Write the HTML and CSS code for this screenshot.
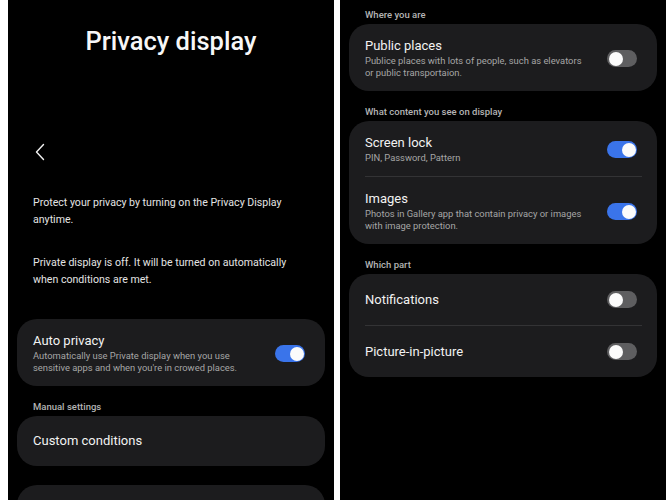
FILE: index.html
```html
<!DOCTYPE html>
<html>
<head>
<meta charset="utf-8">
<link rel="stylesheet" href="styles.css">
</head>
<body>
<main class="screens">
  <section class="panel">
    <h1 class="title">Privacy display</h1>
    <button class="back" aria-label="Back">
      <svg width="10" height="18" viewBox="0 0 10 18"><path d="M8.5 1.5 L1.5 9 L8.5 16.5" fill="none" stroke="#f2f2f2" stroke-width="1.4" stroke-linecap="round" stroke-linejoin="round"/></svg>
    </button>
    <p class="intro">Protect your privacy by turning on the Privacy Display anytime.</p>
    <p class="intro second">Private display is off. It will be turned on automatically when conditions are met.</p>
    <div class="card first-card">
      <div class="row">
        <div class="text">
          <div class="label">Auto privacy</div>
          <div class="sub">Automatically use Private display when you use sensitive apps and when you're in crowed places.</div>
        </div>
        <span class="toggle on"><span class="knob"></span></span>
      </div>
    </div>
    <div class="section">Manual settings</div>
    <div class="card">
      <div class="row single">
        <div class="label">Custom conditions</div>
      </div>
    </div>
    <div class="card spaced">
      <div class="row single">
        <div class="label">&nbsp;</div>
      </div>
    </div>
  </section>

  <section class="panel">
    <div class="section top">Where you are</div>
    <div class="card">
      <div class="row">
        <div class="text">
          <div class="label">Public places</div>
          <div class="sub">Publice places with lots of people, such as elevators or public transportaion.</div>
        </div>
        <span class="toggle off"><span class="knob"></span></span>
      </div>
    </div>
    <div class="section">What content you see on display</div>
    <div class="card">
      <div class="row">
        <div class="text">
          <div class="label">Screen lock</div>
          <div class="sub">PIN, Password, Pattern</div>
        </div>
        <span class="toggle on"><span class="knob"></span></span>
      </div>
      <div class="divider"></div>
      <div class="row">
        <div class="text">
          <div class="label">Images</div>
          <div class="sub">Photos in Gallery app that contain privacy or images with image protection.</div>
        </div>
        <span class="toggle on"><span class="knob"></span></span>
      </div>
    </div>
    <div class="section">Which part</div>
    <div class="card">
      <div class="row single">
        <div class="label">Notifications</div>
        <span class="toggle off"><span class="knob"></span></span>
      </div>
      <div class="divider"></div>
      <div class="row single">
        <div class="label">Picture-in-picture</div>
        <span class="toggle off"><span class="knob"></span></span>
      </div>
    </div>
  </section>
</main>
</body>
</html>
```

FILE: styles.css
```css
* { box-sizing: border-box; }

html, body {
  margin: 0;
  padding: 0;
  background: #ffffff;
}

body {
  font-family: Roboto, "Noto Sans", sans-serif;
  color: #f2f2f2;
}

.screens {
  display: flex;
  gap: 6px;
  padding-left: 8px;
  height: 500px;
}

.panel {
  width: 326px;
  height: 500px;
  background: #000000;
  overflow: hidden;
  padding: 0 9px;
  display: flex;
  flex-direction: column;
}

.title {
  margin: 26px 0 0;
  font-size: 25.5px;
  line-height: 30px;
  font-weight: 500;
  text-align: center;
  color: #f7f7f7;
}

.back {
  margin: 87px 0 0 18px;
  padding: 0;
  border: 0;
  background: none;
  width: 10px;
  height: 18px;
  display: block;
}

.back svg { display: block; }

.intro {
  margin: 33px 0 0;
  padding: 0 33px 0 16px;
  font-size: 10.6px;
  line-height: 17px;
  color: #e4e4e4;
}

.intro.second { margin-top: 26px; }

.card {
  background: #1c1c1e;
  border-radius: 20px;
  flex-shrink: 0;
}

.first-card { margin-top: 31px; }

.card.spaced { margin-top: 19px; }

.row {
  display: flex;
  align-items: center;
  justify-content: space-between;
  padding: 14px 20px 12px 16px;
}

.row.single {
  padding-top: 17px;
  padding-bottom: 17px;
}

.text {
  width: 224px;
}

.label {
  font-size: 13px;
  line-height: 16px;
  color: #f2f2f2;
}

.sub {
  margin-top: 1px;
  font-size: 9.4px;
  line-height: 12px;
  color: #a6a6a6;
}

.section {
  padding: 14px 16px 3px;
  font-size: 9.5px;
  line-height: 13px;
  font-weight: 500;
  color: #b4b4b4;
}

.section.top { padding-top: 8px; }

.divider {
  height: 1px;
  margin: 0 15px 0 16px;
  background: #333335;
}

.toggle {
  width: 30px;
  height: 17px;
  border-radius: 9px;
  padding: 1.5px;
  display: flex;
  flex-shrink: 0;
}

.toggle.on {
  background: #3a74ea;
  justify-content: flex-end;
}

.toggle.off {
  background: #5e5e60;
  justify-content: flex-start;
}

.knob {
  width: 14px;
  height: 14px;
  border-radius: 50%;
  background: #fbfbfb;
}
```
